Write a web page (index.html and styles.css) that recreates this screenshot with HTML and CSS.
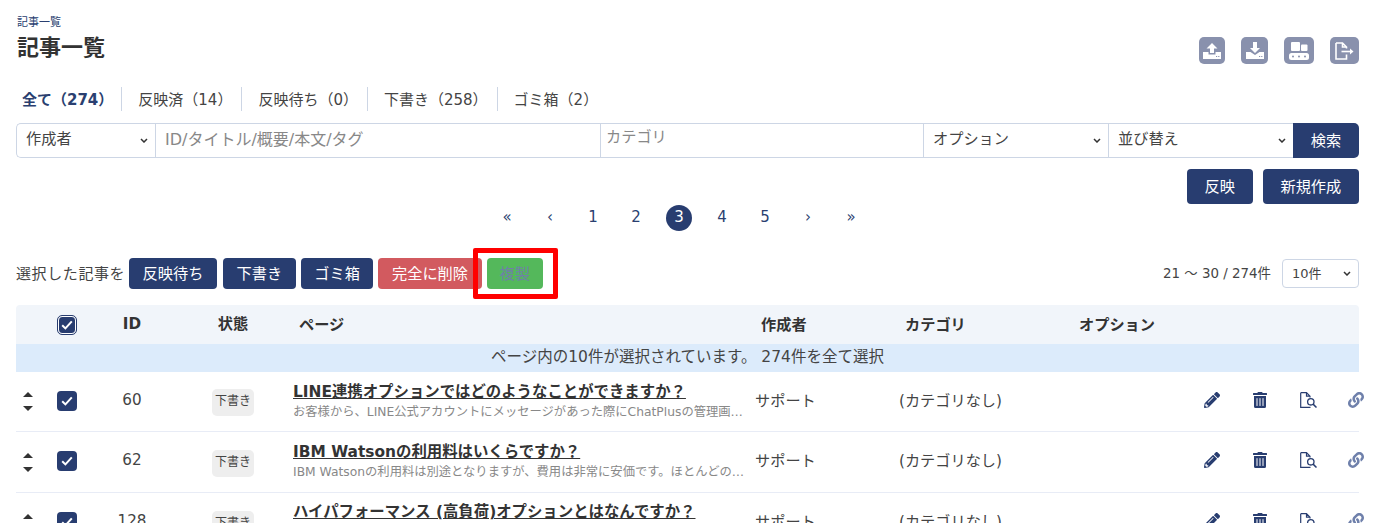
FILE: index.html
```html
<!DOCTYPE html>
<html lang="ja">
<head>
<meta charset="utf-8">
<title>記事一覧</title>
<link rel="stylesheet" href="styles.css">
</head>
<body>
<svg class="defs" width="0" height="0">
  <symbol id="chev" viewBox="0 0 8 5"><path d="M1 1l3 3 3-3" fill="none" stroke="currentColor" stroke-width="1.5"/></symbol>
  <symbol id="pencil" viewBox="0 0 512 512"><path d="M497.9 142.1l-46.1 46.1c-4.7 4.7-12.3 4.7-17 0l-111-111c-4.7-4.7-4.7-12.3 0-17l46.1-46.1c18.7-18.7 49.1-18.7 67.9 0l60.1 60.1c18.8 18.7 18.8 49.1 0 67.9zM284.2 99.8L21.6 362.4.4 483.9c-2.9 16.4 11.4 30.6 27.8 27.8l121.5-21.3 262.6-262.6c4.7-4.7 4.7-12.3 0-17l-111-111c-4.8-4.7-12.4-4.7-17.1 0zM124.1 339.9c-5.5-5.5-5.5-14.3 0-19.8l154-154c5.5-5.5 14.3-5.5 19.8 0s5.5 14.3 0 19.8l-154 154c-5.5 5.5-14.3 5.5-19.8 0zM88 424h48v36.3l-64.5 11.3-31.1-31.1L51.7 376H88v48z"/></symbol>
  <symbol id="trash" viewBox="0 0 448 512"><path d="M32 464a48 48 0 0 0 48 48h288a48 48 0 0 0 48-48V128H32zm272-256a16 16 0 0 1 32 0v224a16 16 0 0 1-32 0zm-96 0a16 16 0 0 1 32 0v224a16 16 0 0 1-32 0zm-96 0a16 16 0 0 1 32 0v224a16 16 0 0 1-32 0zM432 32H312l-9.4-18.7A24 24 0 0 0 281.1 0H166.8a23.72 23.72 0 0 0-21.4 13.3L136 32H16A16 16 0 0 0 0 48v32a16 16 0 0 0 16 16h416a16 16 0 0 0 16-16V48a16 16 0 0 0-16-16z"/></symbol>
  <symbol id="preview" viewBox="0 0 17 16"><path d="M.7.7h5.800l3.500 3.500V5.500M6.500.7v3.500h3.500M.7.7v14.600h9.800" fill="none" stroke="currentColor" stroke-width="1.200"/><circle cx="10.800" cy="9.800" r="3.200" fill="none" stroke="currentColor" stroke-width="1.300"/><path d="M13.100 12.100l3.400 3.400" fill="none" stroke="currentColor" stroke-width="1.500"/></symbol>
  <symbol id="link" viewBox="0 0 512 512"><path d="M326.612 185.391c59.747 59.809 58.927 155.698.36 214.59-.11.12-.24.25-.36.37l-67.2 67.2c-59.27 59.27-155.699 59.262-214.96 0-59.27-59.26-59.27-155.7 0-214.96l37.106-37.106c9.84-9.84 26.786-3.3 27.294 10.606.648 17.722 3.826 35.527 9.69 52.721 1.986 5.822.567 12.262-3.783 16.612l-13.087 13.087c-28.026 28.026-28.905 73.66-1.155 101.96 28.024 28.579 74.086 28.749 102.325.51l67.2-67.19c28.191-28.191 28.073-73.757 0-101.83-3.701-3.694-7.429-6.564-10.341-8.569a16.037 16.037 0 0 1-6.947-12.606c-.396-10.567 3.348-21.456 11.698-29.806l21.054-21.055c5.521-5.521 14.182-6.199 20.584-1.731a152.482 152.482 0 0 1 20.522 17.197zM467.547 44.449c-59.261-59.262-155.69-59.27-214.96 0l-67.2 67.2c-.12.12-.25.25-.36.37-58.566 58.892-59.387 154.781.36 214.59a152.454 152.454 0 0 0 20.521 17.196c6.402 4.468 15.064 3.789 20.584-1.731l21.054-21.055c8.35-8.35 12.094-19.239 11.698-29.806a16.037 16.037 0 0 0-6.947-12.606c-2.912-2.005-6.64-4.875-10.341-8.569-28.073-28.073-28.191-73.639 0-101.83l67.2-67.19c28.239-28.239 74.3-28.069 102.325.51 27.75 28.3 26.872 73.934-1.155 101.96l-13.087 13.087c-4.35 4.35-5.769 10.79-3.783 16.612 5.864 17.194 9.042 34.999 9.69 52.721.509 13.906 17.454 20.446 27.294 10.606l37.106-37.106c59.271-59.259 59.271-155.699.001-214.959z"/></symbol>
  <symbol id="check" viewBox="0 0 12 10"><path d="M1.200 5.200l3.200 3.200 6.400-7" fill="none" stroke="#fff" stroke-width="2"/></symbol>
</svg>

<main class="page">
  <header class="page-head">
    <div>
      <div class="crumb">記事一覧</div>
      <h1 class="title">記事一覧</h1>
    </div>
    <div class="tools">
      <a class="tool tool-up"><svg width="18" height="17" viewBox="0 0 18 17"><path d="M9 1l5.500 5.500H11V11H7V6.500H3.500z" fill="#fff"/><path d="M0 10h5.500v2.500h7V10H18v7H0z" fill="#fff"/><path d="M13 14.500h1.200M15.200 14.500h1.200" stroke="#8991ad"/></svg></a>
      <a class="tool tool-down"><svg width="18" height="17" viewBox="0 0 18 17"><path d="M7 0h4v6h3l-5 5-5-5h3z" fill="#fff"/><path d="M0 10h4.500l4.500 3 4.500-3H18v7H0z" fill="#fff"/><path d="M13 14.500h1.200M15.200 14.500h1.200" stroke="#8991ad"/></svg></a>
      <a class="tool tool-belt"><svg width="20" height="18" viewBox="0 0 20 18"><rect x="2" y="0" width="9" height="9" rx="1" fill="#fff"/><rect x="12" y="2.500" width="6.500" height="6.500" rx="1" fill="#fff"/><rect x="0" y="11" width="20" height="7" rx="2.500" fill="#fff"/><circle cx="4" cy="14.500" r="1" fill="#8991ad"/><circle cx="10" cy="14.500" r="1" fill="#8991ad"/><circle cx="16" cy="14.500" r="1" fill="#8991ad"/></svg></a>
      <a class="tool tool-out"><svg width="19" height="18" viewBox="0 0 19 18"><path d="M1 1h6.500l4 4v1.500M7.500 1v4h4M11.500 12.500V17H1V1" fill="none" stroke="#fff" stroke-width="1.600"/><path d="M6.500 9.500h9" stroke="#fff" stroke-width="1.600"/><path d="M15 6.500l3.500 3-3.500 3z" fill="#fff"/></svg></a>
    </div>
  </header>

  <nav class="tabs">
    <a class="tab tab-on">全て（274）</a>
    <a class="tab">反映済（14）</a>
    <a class="tab">反映待ち（0）</a>
    <a class="tab">下書き（258）</a>
    <a class="tab">ゴミ箱（2）</a>
  </nav>

  <form class="filter">
    <div class="field sel sel-author"><span>作成者</span><svg class="chev"><use href="#chev"/></svg></div>
    <div class="field keyword"><input class="kw" placeholder="ID/タイトル/概要/本文/タグ"></div>
    <div class="field category"><span>カテゴリ</span></div>
    <div class="field sel sel-opt"><span>オプション</span><svg class="chev"><use href="#chev"/></svg></div>
    <div class="field sel sel-opt"><span>並び替え</span><svg class="chev"><use href="#chev"/></svg></div>
    <button class="btn btn-search" type="button">検索</button>
  </form>

  <div class="main-actions">
    <button class="btn btn-wide" type="button">反映</button>
    <button class="btn btn-wide" type="button">新規作成</button>
  </div>

  <div class="pager">
    <a class="pg">«</a><a class="pg">‹</a><a class="pg">1</a><a class="pg">2</a><a class="pg pg-on"><span>3</span></a><a class="pg">4</a><a class="pg">5</a><a class="pg">›</a><a class="pg">»</a>
  </div>

  <div class="bulk">
    <span class="bulk-label">選択した記事を</span>
    <button class="btn btn-first" type="button">反映待ち</button>
    <button class="btn" type="button">下書き</button>
    <button class="btn" type="button">ゴミ箱</button>
    <button class="btn btn-danger" type="button">完全に削除</button>
    <span class="copy-wrap">
      <button class="btn btn-copy" type="button">複製</button>
      <span class="highlight"></span>
    </span>
    <span class="count">21 ～ 30 / 274件</span>
    <div class="per"><span>10件</span><svg class="chev"><use href="#chev"/></svg></div>
  </div>

  <section class="list">
    <div class="row head">
      <div></div>
      <div class="c-check"><span class="cb cb-head"><svg width="12" height="10"><use href="#check"/></svg></span></div>
      <div class="c-id">ID</div>
      <div class="c-state">状態</div>
      <div class="pad">ページ</div>
      <div class="pad">作成者</div>
      <div class="pad">カテゴリ</div>
      <div class="pad">オプション</div>
      <div></div>
    </div>
    <div class="notice">ページ内の10件が選択されています。 274件を全て選択</div>

    <div class="row item">
      <div class="c-sort"><i class="up"></i><i class="down"></i></div>
      <div class="c-check"><span class="cb"><svg width="12" height="10"><use href="#check"/></svg></span></div>
      <div class="c-id num">60</div>
      <div class="c-state"><span class="badge">下書き</span></div>
      <div class="c-page"><a class="ttl">LINE連携オプションではどのようなことができますか？</a><p class="desc">お客様から、LINE公式アカウントにメッセージがあった際にChatPlusの管理画…</p></div>
      <div class="cell">サポート</div>
      <div class="cell">(カテゴリなし)</div>
      <div></div>
      <div class="c-ops"><svg class="op"><use href="#pencil"/></svg><svg class="op"><use href="#trash"/></svg><svg class="op op-prev"><use href="#preview"/></svg><svg class="op op-link"><use href="#link"/></svg></div>
    </div>

    <div class="row item">
      <div class="c-sort"><i class="up"></i><i class="down"></i></div>
      <div class="c-check"><span class="cb"><svg width="12" height="10"><use href="#check"/></svg></span></div>
      <div class="c-id num">62</div>
      <div class="c-state"><span class="badge">下書き</span></div>
      <div class="c-page"><a class="ttl">IBM Watsonの利用料はいくらですか？</a><p class="desc">IBM Watsonの利用料は別途となりますが、費用は非常に安価です。ほとんどの…</p></div>
      <div class="cell">サポート</div>
      <div class="cell">(カテゴリなし)</div>
      <div></div>
      <div class="c-ops"><svg class="op"><use href="#pencil"/></svg><svg class="op"><use href="#trash"/></svg><svg class="op op-prev"><use href="#preview"/></svg><svg class="op op-link"><use href="#link"/></svg></div>
    </div>

    <div class="row item">
      <div class="c-sort"><i class="up"></i><i class="down"></i></div>
      <div class="c-check"><span class="cb"><svg width="12" height="10"><use href="#check"/></svg></span></div>
      <div class="c-id num">128</div>
      <div class="c-state"><span class="badge">下書き</span></div>
      <div class="c-page"><a class="ttl">ハイパフォーマンス (高負荷)オプションとはなんですか？</a></div>
      <div class="cell">サポート</div>
      <div class="cell">(カテゴリなし)</div>
      <div></div>
      <div class="c-ops"><svg class="op"><use href="#pencil"/></svg><svg class="op"><use href="#trash"/></svg><svg class="op op-prev"><use href="#preview"/></svg><svg class="op op-link"><use href="#link"/></svg></div>
    </div>
  </section>
</main>
</body>
</html>
```
FILE: styles.css
```css
* { box-sizing: border-box; }
html, body { margin: 0; height: 523px; overflow: hidden; background: #fff; }
body {
  font-family: "DejaVu Sans", "Noto Sans CJK JP", sans-serif;
  font-size: 15.2px;
  color: #333;
}
.defs { position: absolute; }
.page { padding: 16px 18px 0 16px; }

.page-head { display: flex; justify-content: space-between; height: 66px; }
.crumb { font-size: 11px; line-height: 14px; color: #2a3f70; padding-left: 1px; }
.title { margin: 3px 0 0; padding-left: 1px; font-size: 22px; line-height: 30px; font-weight: 700; color: #333; }
.tools { display: flex; gap: 16px; padding-top: 21px; }
.tool {
  display: flex; align-items: center; justify-content: center;
  height: 27px; background: #8991ad; border-radius: 5px;
}
.tool-up { width: 26px; }
.tool-down { width: 27px; }
.tool-belt { width: 30px; }
.tool-out { width: 29px; }

.tabs { display: flex; height: 24px; align-items: stretch; margin-top: 5px; padding-left: 6px; }
.tab {
  display: flex; align-items: center; padding: 0 9px 2px 16px; border-right: 1px solid #cdd6e5;
  font-size: 15px; color: #444;
}
.tab:first-child { padding-left: 0; padding-right: 8px; }
.tab:last-child { border-right: 0; }
.tab-on { font-weight: 700; color: #2a3f70; }

.filter { display: flex; height: 35px; margin-top: 12px; }
.field {
  display: flex; align-items: center; height: 35px; padding: 0 9px;
  border: 1px solid #cdd6e5; border-right: 0; background: #fff; color: #444;
}
.field span { margin-top: -7px; }
.sel { justify-content: space-between; }
.sel-author { width: 139px; border-radius: 5px 0 0 5px; padding-right: 7px; }
.keyword { width: 445px; padding: 0; }
.kw {
  width: 100%; height: 100%; border: 0; outline: 0; padding: 0 9px 3px;
  font: inherit; font-size: 16px; background: transparent;
}
.kw::placeholder { color: #888; opacity: 1; }
.category { width: 323px; padding: 0 5px; color: #888; }
.category span { margin-top: -12px; }
.sel-opt { width: 185px; padding-right: 7px; }
.chev { width: 8px; height: 5px; color: #333; }

.btn {
  height: 31px; padding: 0 13.600px 3px; border: 0; border-radius: 4px;
  background: #283d70; color: #fff; font: inherit; white-space: nowrap;
}
.btn-first { margin-right: 1px; }
.btn-search { width: 66px; height: 35px; padding: 0 0 3px; border-radius: 0 5px 5px 0; }
.main-actions { display: flex; justify-content: flex-end; gap: 10px; margin-top: 11px; }
.btn-wide { height: 35px; padding: 0 17.800px 3px; }

.pager { display: flex; justify-content: center; align-items: center; height: 26px; margin-top: 1px; padding-right: 17px; }
.pg {
  width: 43px; display: flex; justify-content: center; align-items: center; height: 26px;
  color: #2a3f70; font-size: 15px; padding-bottom: 3px;
}
.pg-on { padding-bottom: 0; }
.pg-on span {
  width: 26px; height: 26px; border-radius: 50%; background: #283d70; color: #fff;
  display: flex; align-items: center; justify-content: center; padding-bottom: 2px;
}

.bulk { display: flex; align-items: center; gap: 5px; height: 31px; margin-top: 27px; }
.bulk-label { color: #444; width: 108px; white-space: nowrap; padding-bottom: 3px; font-size: 15px; letter-spacing: .6px; }
.btn-danger { background: #d25a5f; }
.btn-copy { background: #54b85b; color: #6f80a8; padding: 0 13px 3px; }
.copy-wrap { position: relative; display: flex; }
.highlight {
  position: absolute; left: -14px; right: -15px; top: -10px; bottom: -10px;
  border: 5px solid #f00; border-radius: 2px; pointer-events: none;
}
.count { margin-left: auto; font-size: 13.400px; color: #444; margin-right: 6px; padding-bottom: 3px; }
.per {
  width: 77px; height: 29px; display: flex; align-items: center; justify-content: space-between;
  padding: 0 7px 0 9px; border: 1px solid #cdd6e5; border-radius: 4px; font-size: 13px; color: #444;
}
.per span { margin-top: -3px; }

.list { margin-top: 16px; }
.row {
  display: grid;
  grid-template-columns: 34px 50px 64px 129px 462px 144px 174px 115px 171px;
  align-items: center;
}
.head { height: 39px; background: #f1f5fa; font-weight: 700; border-radius: 4px 4px 0 0; }
.head > div { padding-bottom: 3px; }
.head > .c-id { padding-bottom: 1px; }
.head > .c-state { padding-bottom: 5px; }
.pad { padding-left: 6px; }
.c-check { padding-left: 7px; display: flex; }
.head > .c-check { padding-bottom: 0; }
.c-id { text-align: center; }
.num { color: #444; padding-bottom: 4px; }
.c-state { display: flex; justify-content: center; padding-left: 9px; }
.notice {
  height: 28px; line-height: 26px; text-align: center; background: #dcebfb;
  font-size: 15.500px; color: #444;
}
.item { height: 60px; border-bottom: 1px solid #e8ecf6; }
.item + .item { height: 61px; }
.c-sort { display: flex; flex-direction: column; align-items: center; gap: 9px; padding-right: 10px; }
.up, .down { display: block; width: 0; height: 0; border-left: 5px solid transparent; border-right: 5px solid transparent; }
.up { border-bottom: 5px solid #333; }
.down { border-top: 5px solid #333; }
.item .cb { margin-top: -2px; }
.cb {
  width: 20px; height: 20px; border-radius: 4px; background: #283d70;
  display: flex; align-items: center; justify-content: center;
}
.cb-head { outline: 1px solid #283d70; border: 1px solid #fff; width: 18px; height: 18px; margin: 1px; }
.badge {
  display: block; width: 42px; height: 27px; line-height: 24px; text-align: center;
  border-radius: 5px; background: #eee; font-size: 12px; color: #444; margin-top: 2px;
}
.c-page { min-width: 0; margin-top: -1px; }
.item:last-child .c-page { padding-bottom: 21px; }
.ttl { display: block; font-size: 15.400px; line-height: 20px; font-weight: 700; color: #333; text-decoration: underline; white-space: nowrap; }
.desc { margin: 2px 0 0; font-size: 12.300px; line-height: 17px; color: #888; white-space: nowrap; }
.cell { color: #444; padding-bottom: 6px; }
.c-ops { display: flex; gap: 32px; padding-left: 16px; padding-bottom: 4px; width: 200px; }
.op { width: 16px; height: 16px; flex: none; fill: #283d70; color: #283d70; }
.op-prev { width: 17px; margin-right: -1px; }
.op-link { fill: #6f80ab; }
```
